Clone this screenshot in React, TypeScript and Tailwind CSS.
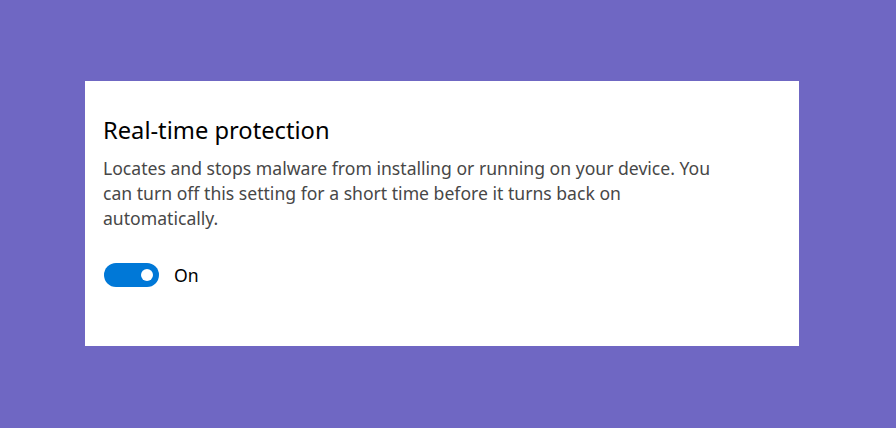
export default function App() {
  return (
    <div className="w-[896px] h-[428px] bg-[#6f67c3] pt-[81px] pl-[85px]">
      <div className="w-[714px] h-[265px] bg-white pl-[18px] pt-[33px] font-['Segoe_UI','Noto_Sans',sans-serif]">
        <h1 className="text-[23.7px] leading-[32px] text-black font-normal">Real-time protection</h1>
        <p className="mt-[10px] w-[630px] text-[17.6px] leading-[25px] text-[#474747]">
          Locates and stops malware from installing or running on your device. You can turn off this
          setting for a short time before it turns back on automatically.
        </p>
        <div className="mt-[31px] ml-[1px] flex items-center gap-[15px]">
          <button className="w-[55px] h-[24px] rounded-full bg-[#0078d7] flex items-center justify-end pr-[6px]">
            <span className="w-[12px] h-[12px] rounded-full bg-white" />
          </button>
          <span className="text-[17.6px] text-black">On</span>
        </div>
      </div>
    </div>
  );
}
